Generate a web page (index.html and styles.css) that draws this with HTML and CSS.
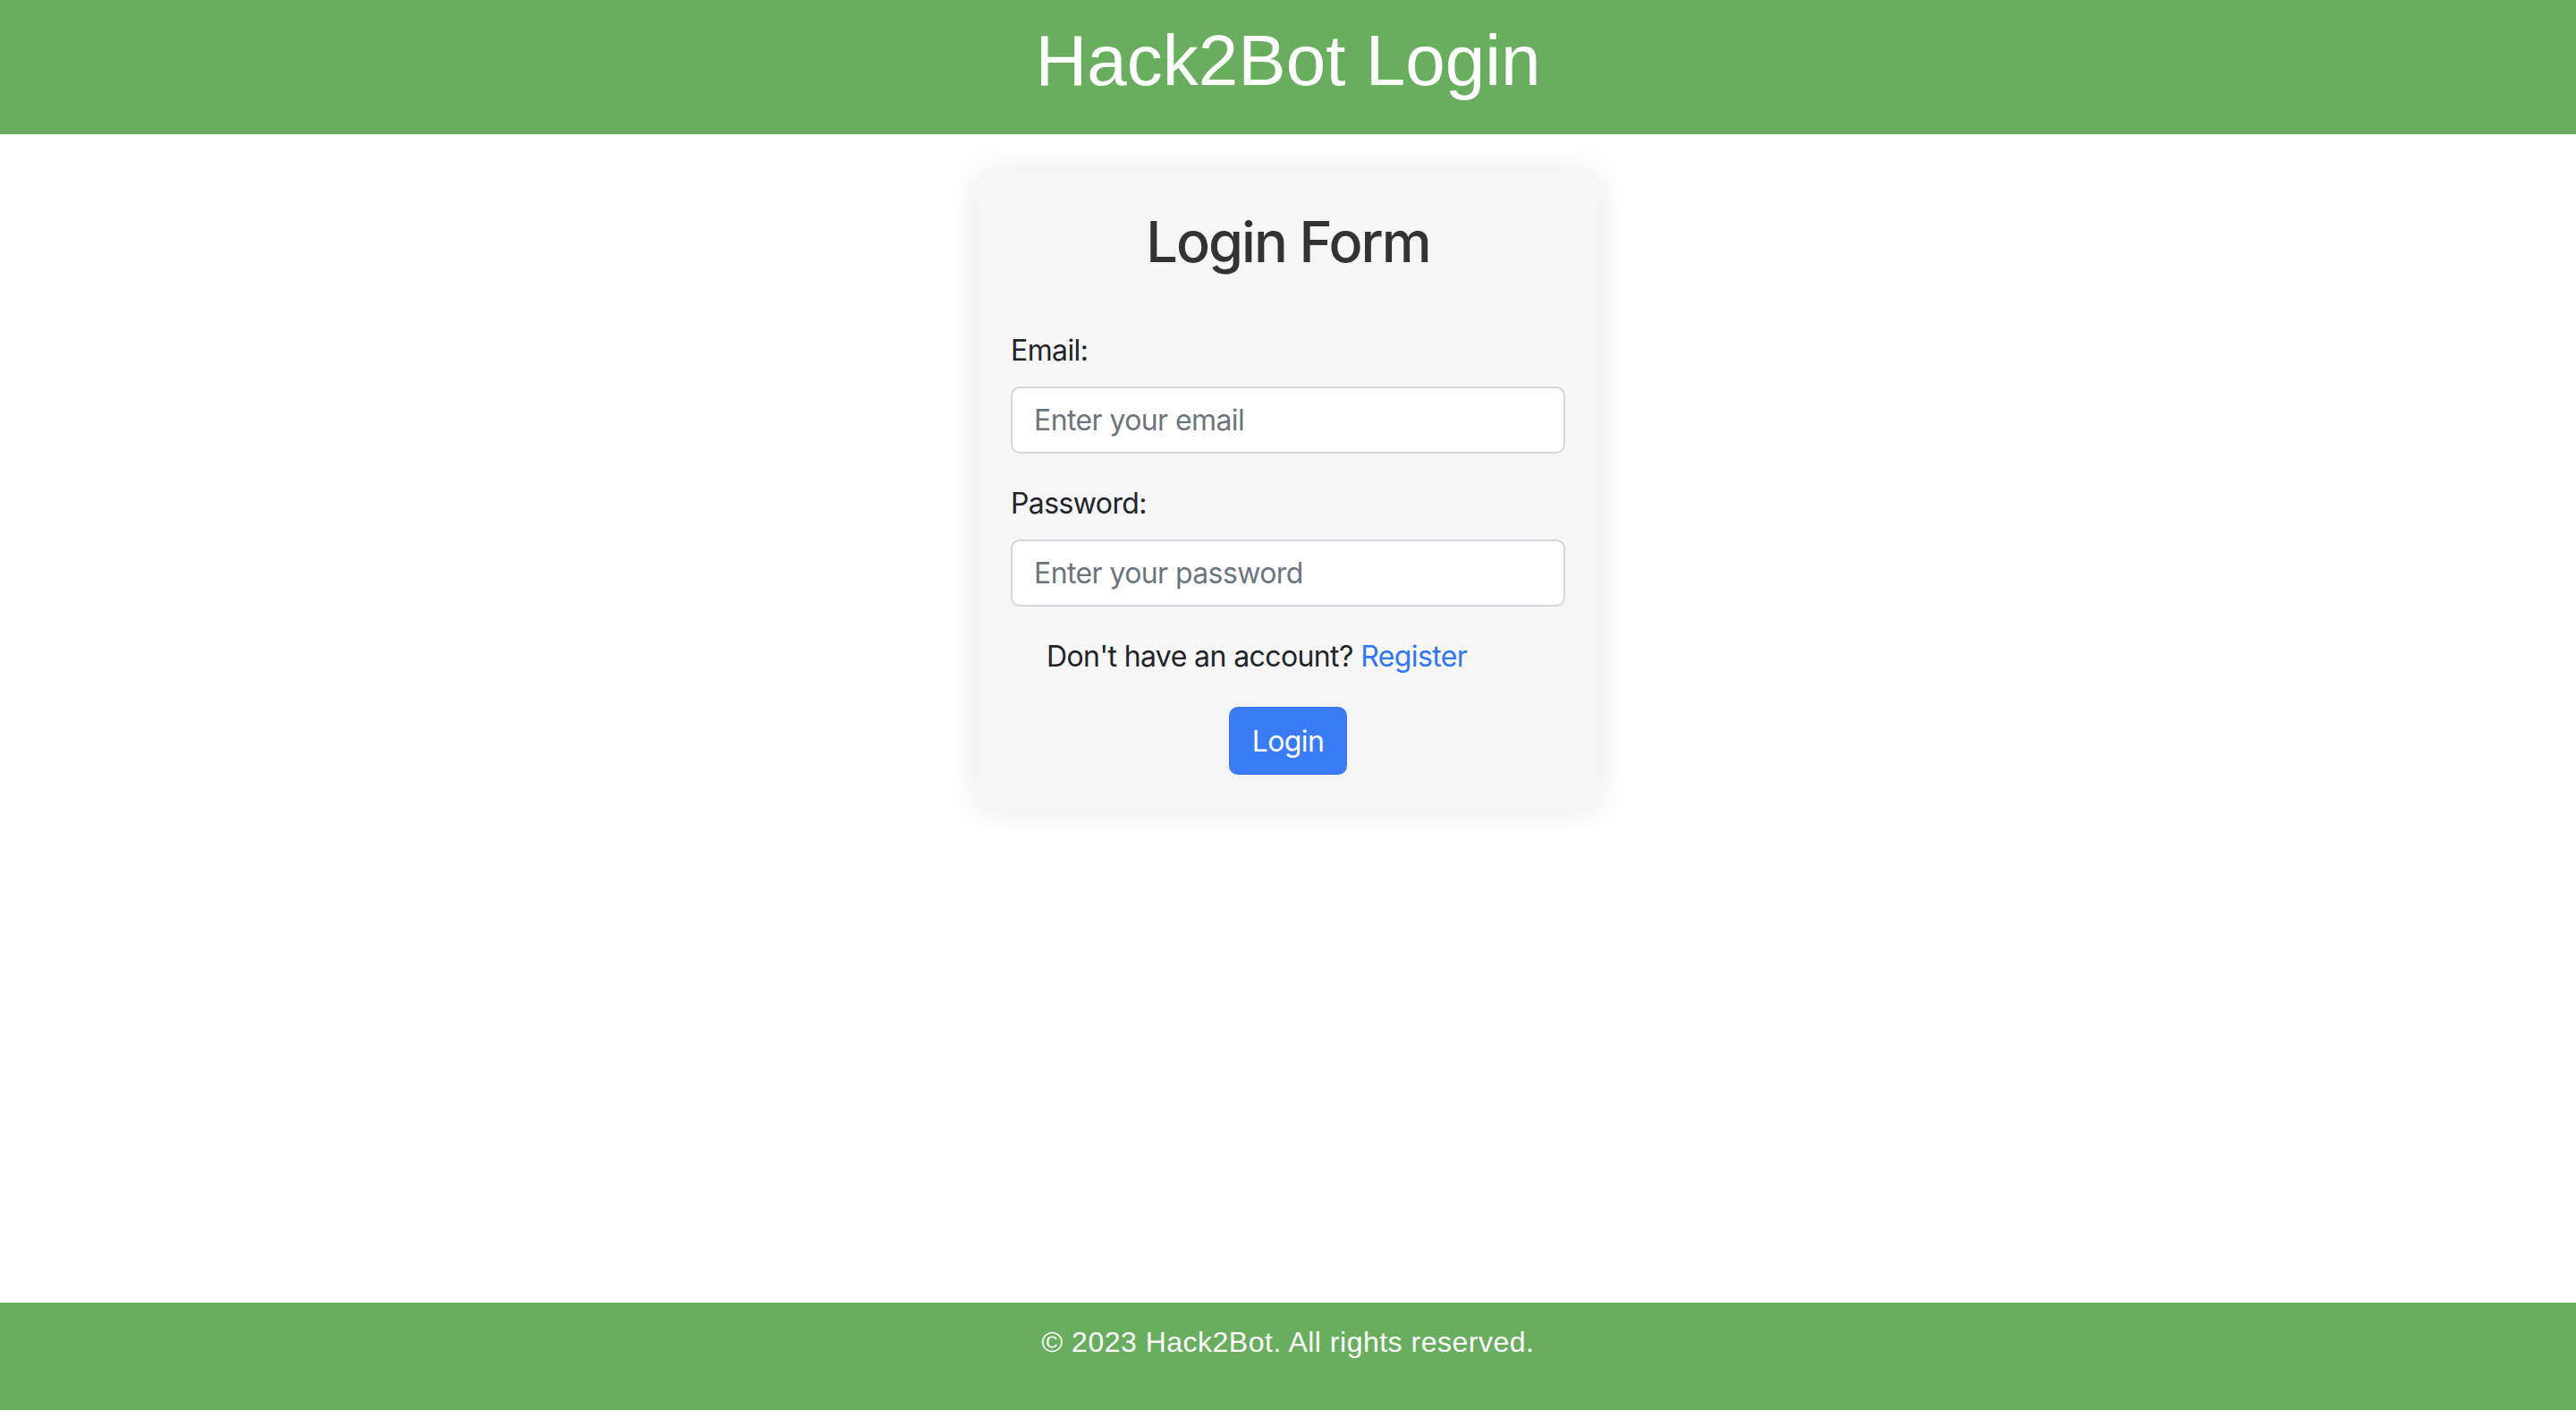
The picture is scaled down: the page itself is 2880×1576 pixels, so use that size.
FILE: index.html
```html
<!DOCTYPE html>
<html lang="en">
<head>
<meta charset="utf-8">
<title>Hack2Bot Login</title>
<link rel="stylesheet" href="styles.css">
</head>
<body>
<div class="page">
  <header class="site-header">
    <h1 class="site-title">Hack2Bot Login</h1>
  </header>
  <main class="main">
    <div class="card">
      <h2 class="card-title">Login Form</h2>
      <form class="form">
        <div class="field">
          <label class="label" for="email">Email:</label>
          <input class="input" id="email" type="email" placeholder="Enter your email">
        </div>
        <div class="field">
          <label class="label" for="password">Password:</label>
          <input class="input" id="password" type="password" placeholder="Enter your password">
        </div>
        <p class="register">Don't have an account? <a class="link" href="#">Register</a></p>
        <div class="actions">
          <button class="btn" type="button">Login</button>
        </div>
      </form>
    </div>
  </main>
  <footer class="site-footer">
    <p class="copy">© 2023 Hack2Bot. All rights reserved.</p>
  </footer>
</div>
</body>
</html>
```
FILE: styles.css
```css
* { box-sizing: border-box; }
html, body { margin: 0; padding: 0; }
body {
  font-family: Inter, "Noto Sans", sans-serif;
  font-size: 32px;
  line-height: 1.5;
  color: #212529;
  background: #ffffff;
}
.page {
  min-height: 100vh;
  display: flex;
  flex-direction: column;
}
.site-header {
  background: #68ae5e;
  height: 150px;
  padding-top: 20px;
  text-align: center;
}
.site-title {
  margin: 0;
  font-family: "Liberation Sans", Arial, sans-serif;
  font-weight: 400;
  font-size: 80px;
  line-height: 96px;
  color: #ffffff;
}
.main {
  flex: 1;
  display: flex;
  justify-content: center;
  align-items: flex-start;
  padding-top: 42px;
}
.card {
  width: 700px;
  background: #f6f6f6;
  border-radius: 20px;
  box-shadow: 0 0 40px rgba(0, 0, 0, 0.09);
  padding: 40px;
  letter-spacing: -0.6px;
}
.card-title {
  margin: 0 0 60px;
  text-align: center;
  font-size: 63px;
  font-weight: 500;
  line-height: 76px;
  color: #333333;
  letter-spacing: -2px;
}
.form { margin: 0; }
.field {
  margin-bottom: 32px;
  display: flex;
  flex-direction: column;
}
.label {
  margin-bottom: 16px;
  line-height: 48px;
  color: #212529;
}
.input {
  height: 75px;
  width: 100%;
  padding: 0 24px;
  font-family: Inter, "Noto Sans", sans-serif;
  font-size: 32px;
  letter-spacing: -0.6px;
  color: #212529;
  background: #ffffff;
  border: 2px solid #d3d6da;
  border-radius: 10px;
}
.input::placeholder { color: #6c757d; }
.register {
  margin: 0 0 32px;
  padding-left: 40px;
  line-height: 48px;
  color: #212529;
}
.link {
  color: #2f76f5;
  text-decoration: none;
}
.actions {
  display: flex;
  justify-content: center;
}
.btn {
  height: 76px;
  padding: 0 26px;
  font-family: Inter, "Noto Sans", sans-serif;
  font-size: 32px;
  letter-spacing: -0.6px;
  color: #ffffff;
  background: #3a7bf6;
  border: none;
  border-radius: 10px;
}
.site-footer {
  background: #68ae5e;
  padding: 20px 0;
  text-align: center;
}
.copy {
  margin: 0 0 32px;
  font-family: "Liberation Sans", Arial, sans-serif;
  font-size: 32px;
  line-height: 48px;
  letter-spacing: 0.5px;
  color: #ffffff;
}
```
